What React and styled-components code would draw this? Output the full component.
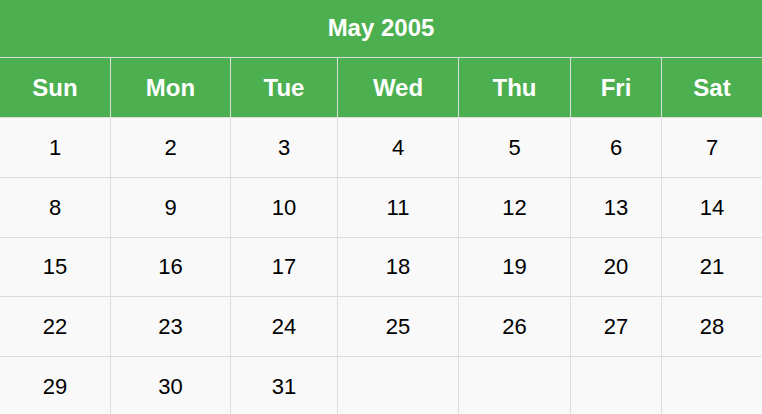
import React from "react";
import styled, { createGlobalStyle } from "styled-components";

const Global = createGlobalStyle`
  html, body { margin: 0; padding: 0; background: #ffffff; }
  body { font-family: "Liberation Sans", Arial, sans-serif; }
`;

const Calendar = styled.div`
  display: grid;
  grid-template-columns: 110px 119px 106px 120px 111px 90px 100px;
  grid-template-rows: 57px 59px 59px 59px 58px 59px 60px;
  gap: 1px;
  background: #dddddd;
  width: 762px;
  font-family: "Liberation Sans", Arial, sans-serif;
`;

const Title = styled.div`
  grid-column: 1 / -1;
  background: #4caf50;
  color: #ffffff;
  font-weight: bold;
  font-size: 24px;
  display: flex;
  align-items: center;
  justify-content: center;
  padding-bottom: 2px;
`;

const DayHead = styled.div`
  background: #4caf50;
  color: #ffffff;
  font-weight: bold;
  font-size: 24px;
  display: flex;
  align-items: center;
  justify-content: center;
`;

const DayCell = styled.div`
  background: #f9f9f9;
  color: #000000;
  font-size: 22px;
  display: flex;
  align-items: center;
  justify-content: center;
`;

const days = ["Sun", "Mon", "Tue", "Wed", "Thu", "Fri", "Sat"];

export default function App() {
  const cells = [];
  for (let i = 0; i < 35; i++) {
    const n = i + 1;
    cells.push(<DayCell key={i}>{n <= 31 ? n : ""}</DayCell>);
  }
  return (
    <>
      <Global />
      <Calendar>
        <Title>May 2005</Title>
        {days.map((d) => (
          <DayHead key={d}>{d}</DayHead>
        ))}
        {cells}
      </Calendar>
    </>
  );
}
